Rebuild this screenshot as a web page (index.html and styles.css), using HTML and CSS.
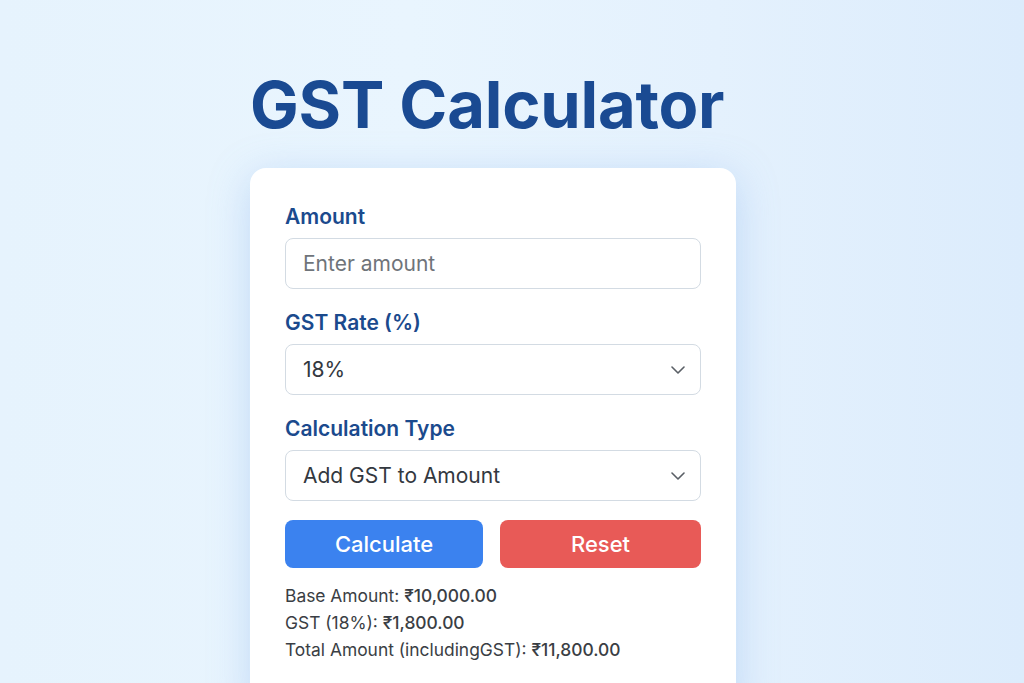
FILE: index.html
```html
<!DOCTYPE html>
<html lang="en">
<head>
<meta charset="utf-8">
<title>GST Calculator</title>
<link rel="stylesheet" href="styles.css">
</head>
<body>
<main class="page">
  <h1 class="title">GST Calculator</h1>
  <section class="card">
    <div class="field">
      <label class="label">Amount</label>
      <div class="control"><span class="placeholder">Enter amount</span></div>
    </div>
    <div class="field">
      <label class="label">GST Rate (%)</label>
      <div class="control select"><span class="value">18%</span>
        <svg class="chev" viewBox="0 0 14 8" width="14" height="8"><path d="M1 1l6 6 6-6" fill="none" stroke="#5a5f66" stroke-width="1.6" stroke-linecap="round" stroke-linejoin="round"/></svg>
      </div>
    </div>
    <div class="field">
      <label class="label">Calculation Type</label>
      <div class="control select"><span class="value">Add GST to Amount</span>
        <svg class="chev" viewBox="0 0 14 8" width="14" height="8"><path d="M1 1l6 6 6-6" fill="none" stroke="#5a5f66" stroke-width="1.6" stroke-linecap="round" stroke-linejoin="round"/></svg>
      </div>
    </div>
    <div class="buttons">
      <button class="btn btn-calc">Calculate</button>
      <button class="btn btn-reset">Reset</button>
    </div>
    <div class="results">
      <p>Base Amount: <strong>₹10,000.00</strong></p>
      <p>GST (18%): <strong>₹1,800.00</strong></p>
      <p>Total Amount (includingGST): <strong>₹11,800.00</strong></p>
    </div>
  </section>
</main>
</body>
</html>
```
FILE: styles.css
```css
* { box-sizing: border-box; }
html, body { margin: 0; height: 100%; }
body {
  font-family: Inter, "Noto Sans", sans-serif;
  background: linear-gradient(90deg, #e6f3fd 0%, #e9f5fe 40%, #e4f1fd 70%, #dcecfc 100%);
  overflow: hidden;
}
.page {
  height: 683px;
  overflow: hidden;
  padding-left: 250px;
  padding-top: 66px;
  display: flex;
  flex-direction: column;
}
.title {
  margin: 0 0 25px 0;
  font-size: 65px;
  line-height: 77px;
  font-weight: 700;
  color: #1a4a92;
  letter-spacing: -0.2px;
}
.card {
  flex: none;
  width: 486px;
  height: 545px;
  background: #fff;
  border-radius: 16px;
  padding: 36px 35px 0;
  box-shadow: 0 8px 40px rgba(120, 170, 235, 0.35);
}
.field { display: flex; flex-direction: column; }
.label {
  font-size: 21px;
  line-height: 26px;
  font-weight: 600;
  color: #1b4a8d;
  margin-bottom: 8px;
}
.control {
  height: 51px;
  border: 1px solid #d3dbe3;
  border-radius: 8px;
  padding: 0 15px 0 17px;
  display: flex;
  align-items: center;
  justify-content: space-between;
  font-size: 21px;
  margin-bottom: 21px;
}
.placeholder { color: #6f747a; }
.value { color: #333840; }
.buttons {
  display: flex;
  gap: 17px;
  margin-top: -2px;
}
.btn {
  height: 48px;
  border: none;
  border-radius: 8px;
  font-family: inherit;
  font-size: 22px;
  font-weight: 500;
  color: #fff;
}
.btn-calc { background: #3b82ef; flex: 198; }
.btn-reset { background: #e85a57; flex: 201; }
.results { margin-top: 14px; }
.results p {
  margin: 0;
  font-size: 17.4px;
  line-height: 27px;
  color: #3a3e44;
}
.results strong { font-weight: 500; }
```
